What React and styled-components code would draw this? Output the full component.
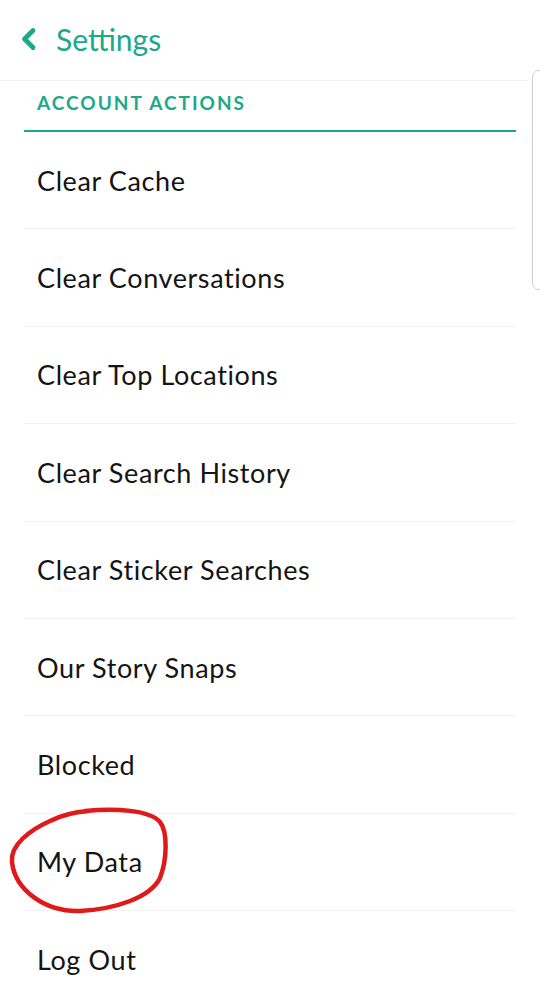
import React from "react";
import styled, { createGlobalStyle } from "styled-components";

const Global = createGlobalStyle`
  html, body { margin: 0; padding: 0; background: #fff; }
  body { font-family: Lato, "Noto Sans", sans-serif; -webkit-font-smoothing: antialiased; }
`;

const TEAL = "#1ca88a";

const Screen = styled.div`
  position: relative;
  width: 540px;
  height: 995px;
  overflow: hidden;
  background: #fff;
`;

const Header = styled.header`
  height: 80px;
  display: flex;
  align-items: center;
  gap: 19px;
  padding-left: 20px;
  border-bottom: 1px solid #f0f0f0;
  margin-right: 12px;
`;

const BackIcon = styled.svg`
  width: 17px;
  height: 24px;
  margin-top: -2px;
`;

const Title = styled.h1`
  margin: 0;
  font-size: 30px;
  font-weight: 400;
  color: ${TEAL};
  margin-top: -3px;
`;

const Section = styled.section`
  margin: 0 24px;
`;

const SectionTitle = styled.div`
  height: 51px;
  display: flex;
  align-items: center;
  padding-left: 13px;
  padding-bottom: 6px;
  box-sizing: border-box;
  border-bottom: 2px solid ${TEAL};
  color: ${TEAL};
  font-size: 19px;
  font-weight: 700;
  letter-spacing: 2px;
`;

const Row = styled.div`
  height: 96.4px;
  display: flex;
  align-items: center;
  padding-left: 13px;
  font-size: 27px;
  letter-spacing: 0.6px;
  color: #141414;
  border-bottom: 1px solid #f2f2f2;
  &:last-child { border-bottom: none; }
`;

const Scrollbar = styled.div`
  position: absolute;
  top: 70px;
  left: 532px;
  width: 20px;
  height: 220px;
  border: 1px solid #cfcfcf;
  border-radius: 7px;
  box-sizing: border-box;
`;

const Annotation = styled.svg`
  position: absolute;
  left: 0;
  top: 0;
  pointer-events: none;
`;

const items = [
  "Clear Cache",
  "Clear Conversations",
  "Clear Top Locations",
  "Clear Search History",
  "Clear Sticker Searches",
  "Our Story Snaps",
  "Blocked",
  "My Data",
  "Log Out",
];

export default function App() {
  return (
    <Screen>
      <Global />
      <Header>
        <BackIcon viewBox="0 0 17 24">
          <path d="M13 3.5 L4.5 12 L13 20.5" fill="none" stroke={TEAL} strokeWidth="4.8" strokeLinecap="round" strokeLinejoin="round" />
        </BackIcon>
        <Title>Settings</Title>
      </Header>
      <Section>
        <SectionTitle>ACCOUNT ACTIONS</SectionTitle>
        {items.map((t) => (
          <Row key={t}>{t}</Row>
        ))}
      </Section>
      <Scrollbar />
      <Annotation width="540" height="995" viewBox="0 0 540 995">
        <path
          d="M85 811 C115 808 150 810 160 822 C168 832 167 860 160 878 C150 898 115 909 80 911 C45 912 15 890 12 862 C10 845 30 830 50 821 C62 815 75 812 88 811"
          fill="none"
          stroke="#de1a1a"
          strokeWidth="4.5"
          strokeLinecap="round"
        />
      </Annotation>
    </Screen>
  );
}
